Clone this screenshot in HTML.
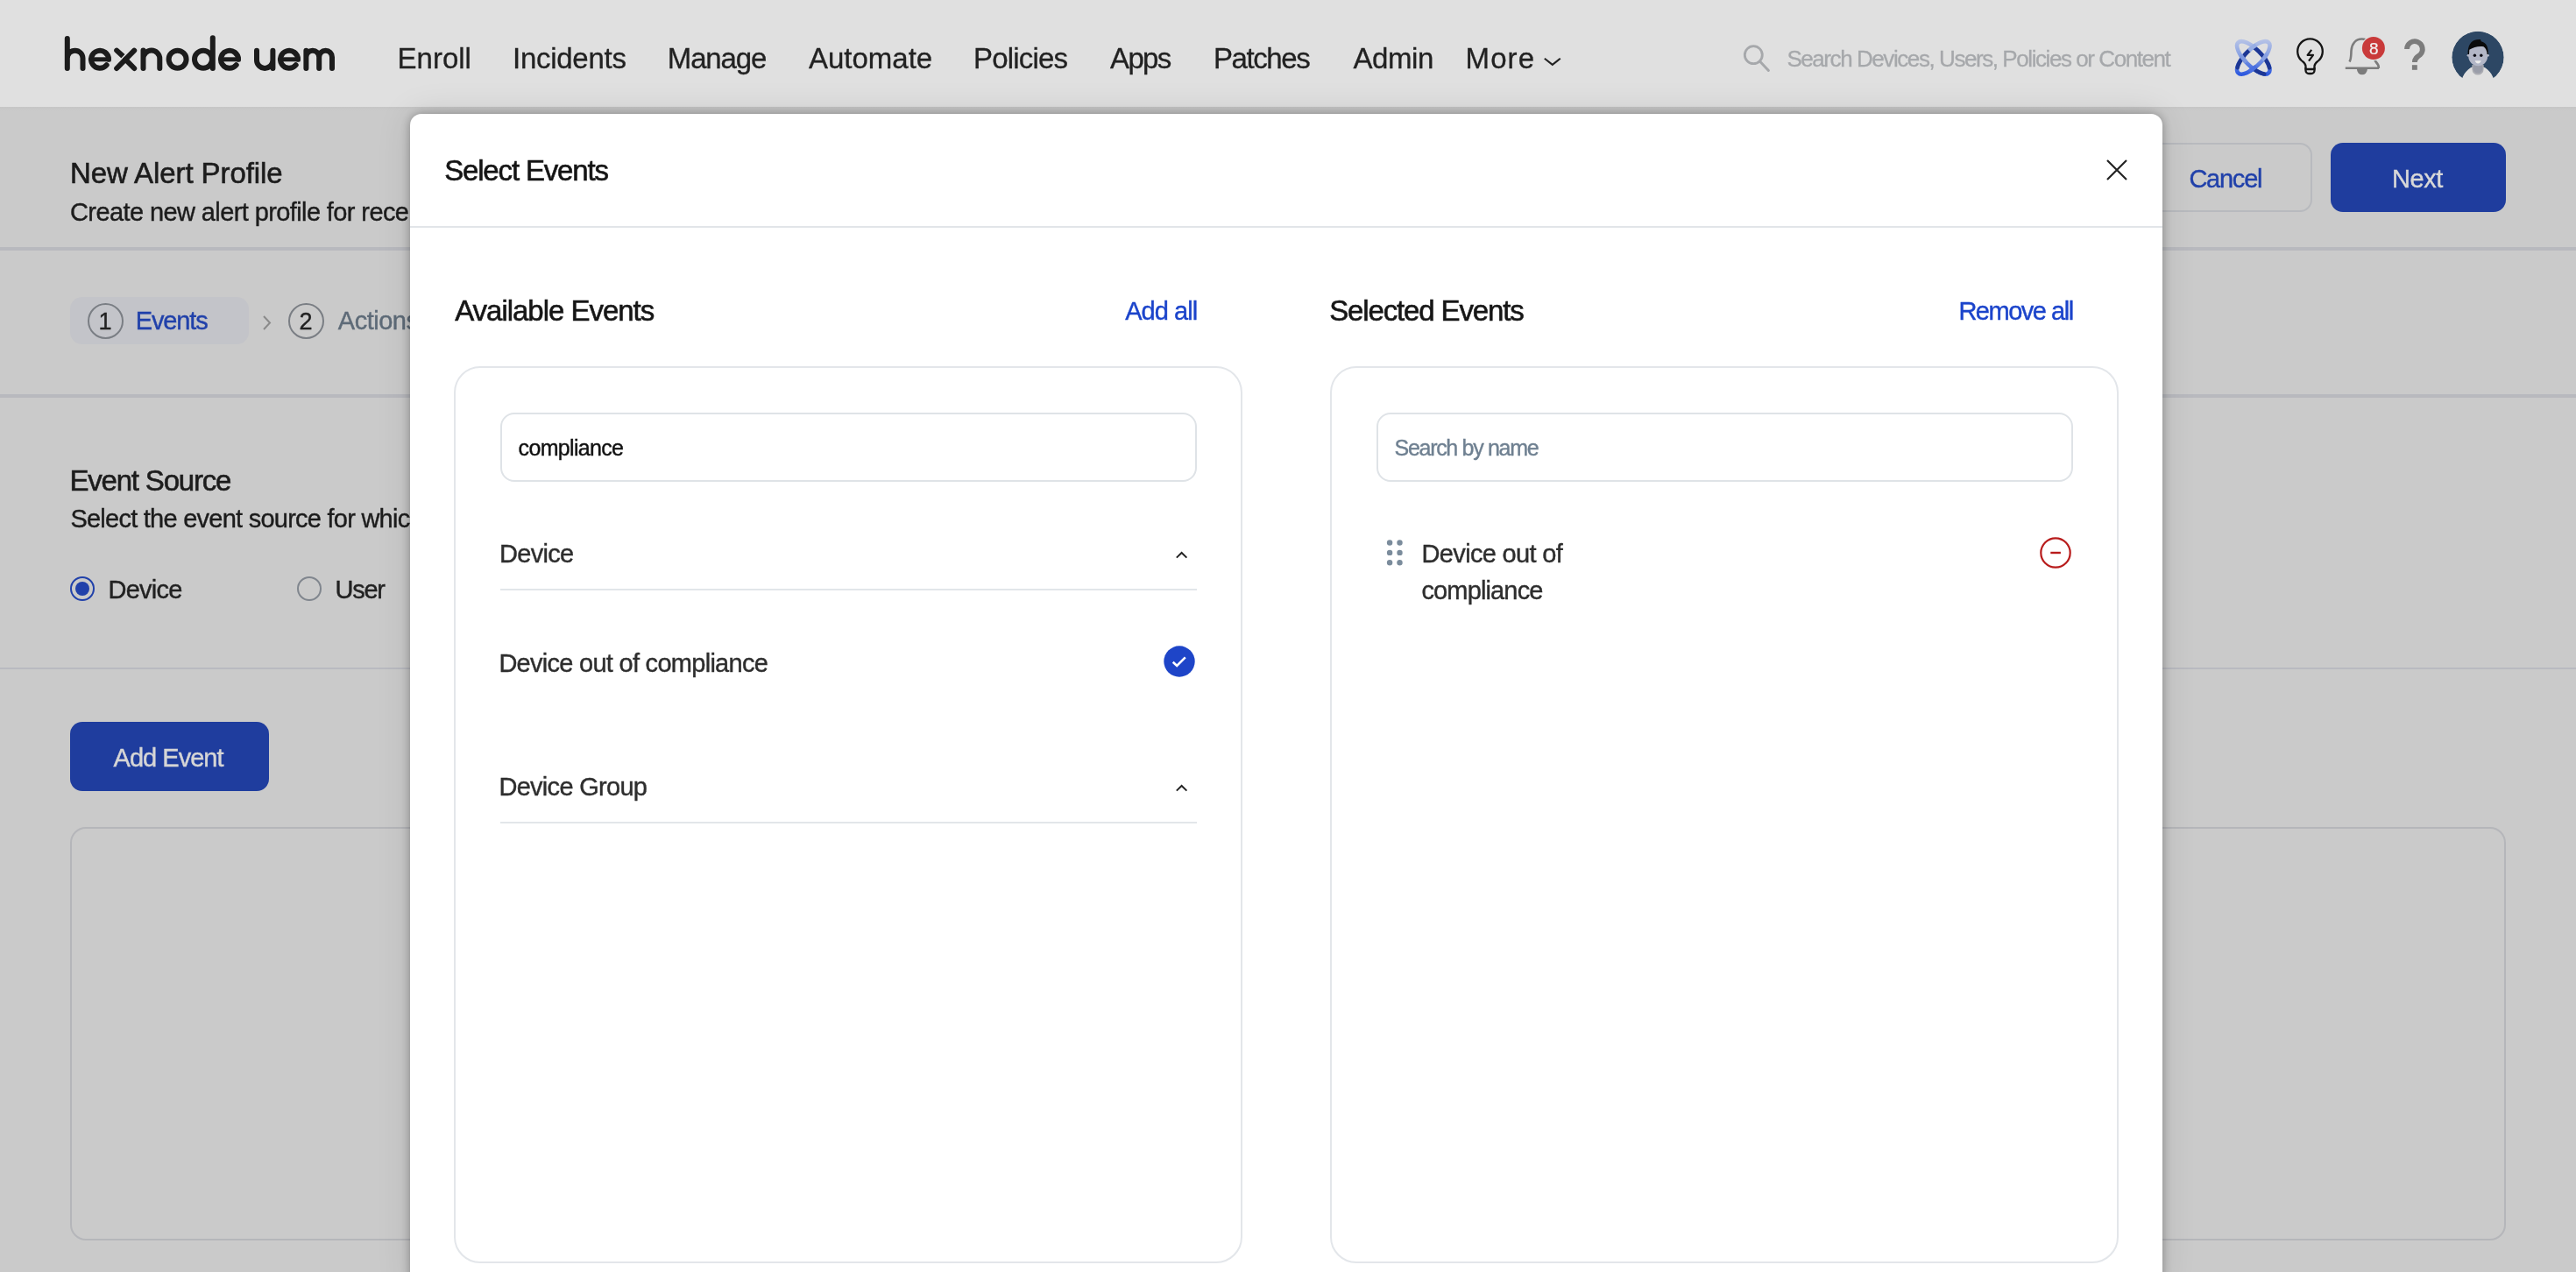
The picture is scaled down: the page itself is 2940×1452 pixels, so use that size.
<!DOCTYPE html>
<html><head><meta charset="utf-8">
<style>
html,body{margin:0;padding:0;}
body{width:2940px;height:1452px;overflow:hidden;position:relative;background:#cacaca;font-family:"Liberation Sans",sans-serif;will-change:transform;}
.t{position:absolute;line-height:1;white-space:nowrap;}
.abs{position:absolute;}
#hdr{position:absolute;left:0;top:0;width:2940px;height:122px;background:#e0e0e0;}
#hdrsh{position:absolute;left:0;top:122px;width:2940px;height:5px;background:linear-gradient(#c6c6c6,#cacaca);}
.nav{font-size:32px;color:#222;letter-spacing:-0.3px;}
.sep{position:absolute;left:0;width:2940px;}
#modal{position:absolute;left:468px;top:130px;width:2000px;height:1340px;background:#fff;border-radius:13px 13px 0 0;box-shadow:0 0 12px 0 rgba(0,0,0,0.30),0 0 40px 0 rgba(0,0,0,0.11);}
.m{position:absolute;}
.h32{font-size:32px;color:#161616;letter-spacing:-0.6px;}
.lnk{font-size:28px;color:#1b44cb;letter-spacing:-0.6px;}
.panel{position:absolute;top:288px;width:900px;height:1024px;border:2px solid #e3e6ea;border-radius:30px;box-sizing:border-box;}
.inp{position:absolute;width:795px;height:79px;border:2px solid #dfe3e7;border-radius:16px;box-sizing:border-box;}
.item{font-size:28px;color:#2e2e2e;letter-spacing:-0.4px;}
</style></head>
<body>
<!-- header -->
<div id="hdr">
  <svg class="abs" style="left:0;top:0" width="400" height="122" viewBox="0 0 400 122">
    <g fill="none" stroke="#1c1c1c" stroke-width="6" stroke-linecap="round">
      <!-- h -->
      <path d="M76.8,44 V78 M76.8,66.5 A8.85,8.85 0 0 1 94.5,66.5 V78"/>
      <!-- e -->
      <path d="M124,67.8 A10,10 0 1 0 121.7,74.2"/>
      <path d="M104,67.8 H126.5" stroke-linecap="butt" stroke-width="5"/>
      <!-- x -->
      <path d="M133.2,57.6 L140.5,64.3" stroke-linecap="round"/>
      <path d="M153.2,57.6 L133.2,78" stroke="#e0e0e0" stroke-width="9" stroke-linecap="butt"/>
      <path d="M153.2,57.6 L133.2,78"/>
      <path d="M143.2,67.8 L153.2,78"/>
      <!-- n -->
      <path d="M163.5,57.6 V78 M163.5,67 A9.4,9.4 0 0 1 182.3,67 V78"/>
      <!-- o -->
      <circle cx="202.6" cy="67.8" r="10"/>
      <!-- d -->
      <circle cx="232" cy="67.8" r="10"/>
      <path d="M242.8,43.3 V78"/>
      <!-- e -->
      <path d="M272,67.8 A10,10 0 1 0 269.7,74.2"/>
      <path d="M252,67.8 H274.5" stroke-linecap="butt" stroke-width="5"/>
      <!-- u -->
      <path d="M293,57.8 V68.7 A9.2,9.2 0 0 0 311.4,68.7 M311.4,57.8 V78"/>
      <!-- e -->
      <path d="M340,67.8 A10,10 0 1 0 337.7,74.2"/>
      <path d="M320,67.8 H342.5" stroke-linecap="butt" stroke-width="5"/>
      <!-- m -->
      <path d="M349.4,57.8 V78 M349.4,65.2 A7.4,7.4 0 0 1 364.2,65.2 V78 M364.2,65.2 A7.4,7.4 0 0 1 379,65.2 V78"/>
    </g>
  </svg>
<div class="t" id="n1" style="left:453.60px;top:50px;font-size:33px;color:#222;letter-spacing:-0.02px;-webkit-text-stroke:0.3px #222">Enroll</div>
<div class="t" id="n2" style="left:585.00px;top:50px;font-size:33px;color:#222;letter-spacing:-0.27px;-webkit-text-stroke:0.3px #222">Incidents</div>
<div class="t" id="n3" style="left:761.80px;top:50px;font-size:33px;color:#222;letter-spacing:-1.16px;-webkit-text-stroke:0.3px #222">Manage</div>
<div class="t" id="n4" style="left:923.00px;top:50px;font-size:33px;color:#222;letter-spacing:-0.01px;-webkit-text-stroke:0.3px #222">Automate</div>
<div class="t" id="n5" style="left:1111.00px;top:50px;font-size:33px;color:#222;letter-spacing:-0.81px;-webkit-text-stroke:0.3px #222">Policies</div>
<div class="t" id="n6" style="left:1267.00px;top:50px;font-size:33px;color:#222;letter-spacing:-1.63px;-webkit-text-stroke:0.3px #222">Apps</div>
<div class="t" id="n7" style="left:1385.00px;top:50px;font-size:33px;color:#222;letter-spacing:-1.42px;-webkit-text-stroke:0.3px #222">Patches</div>
<div class="t" id="n8" style="left:1544.40px;top:50px;font-size:33px;color:#222;letter-spacing:-0.42px;-webkit-text-stroke:0.3px #222">Admin</div>
<div class="t" id="n9" style="left:1672.60px;top:50px;font-size:33px;color:#222;letter-spacing:1.07px;-webkit-text-stroke:0.3px #222">More</div>
  <svg class="abs" style="left:1760px;top:60px" width="24" height="16"><path d="M2.8,6.7 L11.8,13.9 L20.8,6.7" fill="none" stroke="#222" stroke-width="2.1"/></svg>
  <!-- search -->
  <svg class="abs" style="left:1985px;top:47px" width="40" height="40"><circle cx="16.3" cy="15.7" r="10" fill="none" stroke="#a6a8ab" stroke-width="2.8"/><path d="M23.5,23 L33.4,33.5" stroke="#a6a8ab" stroke-width="3" stroke-linecap="round"/></svg>
<div class="t" id="srch" style="left:2039.40px;top:54px;font-size:26px;color:#a6a8ab;letter-spacing:-1.43px;-webkit-text-stroke:0.3px #a6a8ab">Search Devices, Users, Policies or Content</div>
  <svg class="abs" style="left:2500px;top:0" width="440" height="122" viewBox="2500 0 440 122">
    <defs>
      <linearGradient id="ag" x1="0" y1="45" x2="0" y2="87" gradientUnits="userSpaceOnUse">
        <stop offset="0" stop-color="#b8c4e6"/><stop offset="0.45" stop-color="#86a0e3"/><stop offset="1" stop-color="#2552de"/>
      </linearGradient>
      <linearGradient id="ad" x1="0" y1="50" x2="0" y2="86" gradientUnits="userSpaceOnUse">
        <stop offset="0" stop-color="#1b3590"/><stop offset="1" stop-color="#243f9e"/>
      </linearGradient>
    </defs>
    <g fill="none" stroke-width="4.6" stroke-linecap="round">
      <path d="M2554.48,48.58 A24.5,9.4 45 1 1 2589.12,83.22 A24.5,9.4 45 1 1 2554.48,48.58 Z" stroke="url(#ag)"/>
      <path d="M2589.12,48.58 A24.5,9.4 -45 1 1 2554.48,83.22 A24.5,9.4 -45 1 1 2589.12,48.58 Z" stroke="url(#ag)"/>
      <path d="M2573.2,54.6 L2574.9,56.0 L2577.4,58.2 L2579.7,60.6 L2581.9,63.0 L2584.0,65.6 L2585.8,68.1 L2587.3,70.6 L2588.6,73.0 L2589.5,75.3 L2590.1,77.4" stroke="#1d3794"/>
      <path d="M2584.3,84.4 L2583.3,84.2 L2582.3,83.9 L2581.2,83.6 L2580.1,83.2 L2578.9,82.7 L2577.7,82.1 L2576.5,81.4 L2575.3,80.7 L2574.0,79.9" stroke="#1d3794"/>
      <path d="M2553.6,77.2 L2554.1,75.3 L2554.9,73.2 L2556.0,71.1 L2557.4,68.8 L2558.9,66.5 L2560.7,64.2 L2562.6,61.9 L2564.7,59.7 L2566.9,57.6" stroke="#1d3794"/>
      <path d="M2563.7,71.0 L2562.2,69.4 L2560.9,67.8 L2559.6,66.2 L2558.5,64.6 L2557.4,63.0" stroke="#7d98e0" stroke-linecap="butt"/>
      <path d="M2566.7,57.8 L2568.3,56.3 L2569.9,55.0 L2571.5,53.7 L2573.1,52.6 L2574.7,51.5" stroke="#97ade4" stroke-linecap="butt"/>
      <path d="M2587.2,61.4 L2584.8,65.1 L2581.8,68.9" stroke="#87a0e2" stroke-linecap="butt"/>
      <path d="M2574.8,75.9 L2571.0,78.9 L2567.3,81.3" stroke="#4a6fe0" stroke-linecap="butt"/>
    </g>
    <!-- bulb -->
    <g fill="none" stroke="#161616" stroke-width="2.3" stroke-linejoin="round" stroke-linecap="round">
      <path d="M2631.5,79 V75.5 C2631.5,72.5 2629.5,71.5 2626.6,69 A14.3,14.3 0 1 1 2646.4,69 C2643.5,71.5 2641.5,72.5 2641.5,75.5 V79"/>
      <path d="M2631.5,79 H2641.5 M2631.5,78 V80.5 A3.5,3.5 0 0 0 2635,84 H2638 A3.5,3.5 0 0 0 2641.5,80.5 V78"/>
      <path d="M2638.2,56.8 L2633.6,62.8 H2640 L2635,69.6" stroke-width="2.2" stroke-linecap="butt"/>
    </g>
    <!-- bell -->
    <g fill="none" stroke="#7c7c7c" stroke-width="2.6">
      <path d="M2681.4,70.5 C2683.5,67.5 2683.2,64 2683.5,58 C2684,50 2688.5,44.5 2695.7,44.5 C2702,44.5 2706,49 2707,55 C2708,62 2708.5,66.5 2711.5,70.5 C2714,73 2715,74.5 2714.8,77.8"/>
      <path d="M2676.8,77.8 H2715"/>
    </g>
    <path d="M2689.9,78.8 A6,6.5 0 0 0 2701.9,78.8 Z" fill="#7c7c7c"/>
    <circle cx="2708.9" cy="55" r="14.2" fill="#e0e0e0"/>
    <circle cx="2708.9" cy="55" r="13" fill="#c93a3a"/>
    <text x="2709.2" y="62.3" font-family="Liberation Sans" font-size="19" fill="#f2f2f2" stroke="#f2f2f2" stroke-width="0.2" text-anchor="middle">8</text>
    <!-- question -->
    <path d="M2747,56 A8.9,8.9 0 1 1 2762.3,62.3 C2758.5,65 2755.9,66.5 2755.9,71" fill="none" stroke="#7c7c7c" stroke-width="5.8"/>
    <rect x="2752.9" y="74.2" width="5.9" height="5.6" fill="#7c7c7c"/>
    <!-- avatar -->
    <defs><clipPath id="avc"><circle cx="2828" cy="65.5" r="29.7"/></clipPath></defs>
    <g clip-path="url(#avc)">
      <circle cx="2828" cy="65.5" r="29.7" fill="#2d4764"/>
    </g>
    <path d="M2809.5,91 C2813,81 2819.5,75.2 2828,75.2 C2836.5,75.2 2843,81 2846.5,91 L2852,97 H2804 Z" fill="#e0e0e0"/>
    <path d="M2821.4,74 H2834.6 V79 A6.6,6.6 0 0 1 2821.4,79 Z" fill="#acadb3"/>
    <path d="M2822.5,74 H2833.5 V78 A5.5,5.5 0 0 1 2822.5,78 Z" fill="#9a9da9"/>
    <path d="M2817.2,60 C2817.2,53 2821,50 2828.2,50 C2835.5,50 2839.3,53 2839.3,60 L2839.2,64 C2839,71 2834,75.2 2828.2,75.2 C2822.5,75.2 2817.4,71 2817.2,64 Z" fill="#b3b7c7"/><circle cx="2817" cy="63.3" r="1.4" fill="#b3b7c7"/><circle cx="2839.5" cy="63.3" r="1.4" fill="#b3b7c7"/>
    <path d="M2816.6,62 C2816.3,52 2820,46 2827,45.2 L2831,45 L2831.8,47.3 C2837.5,48.5 2840.2,54 2839.8,62 L2838.6,62 C2838.4,58 2837,55 2834.5,53.2 C2829,52.4 2823,53.6 2818.3,56.8 L2818,62 Z" fill="#0a0a0a"/>
    <circle cx="2824.4" cy="63.3" r="1.7" fill="#0c0c14"/>
    <circle cx="2831.8" cy="63.3" r="1.7" fill="#0c0c14"/>
    <path d="M2824.6,69.3 H2831.8 C2831,71.6 2829.5,72.5 2828.2,72.5 C2826.9,72.5 2825.4,71.6 2824.6,69.3 Z" fill="#ececec"/>
  </svg>
</div>
<div id="hdrsh"></div>

<!-- page -->
<div class="t" id="ttl" style="left:80.00px;top:181px;font-size:33px;color:#1c1c1c;letter-spacing:-0.08px;-webkit-text-stroke:0.6px #1c1c1c">New Alert Profile</div>
<div class="t" id="sub" style="left:80.00px;top:228px;font-size:29px;color:#1c1c1c;letter-spacing:-0.60px;-webkit-text-stroke:0.4px #1c1c1c">Create new alert profile for receiving notifications</div>
<div class="sep" style="top:282px;height:4px;background:#b8b9be"></div>
<div class="abs" style="left:80px;top:339px;width:204px;height:54px;border-radius:14px;background:#c3c4c9"></div>
<div class="abs" style="left:100px;top:346px;width:37px;height:37px;border:2px solid #7a7e84;border-radius:50%"></div>
<div class="t" id="s1" style="left:112.50px;top:354px;font-size:27px;color:#222;letter-spacing:-0.30px;-webkit-text-stroke:0.4px #222">1</div>
<div class="t" id="sev" style="left:154.80px;top:352px;font-size:29px;color:#2141aa;letter-spacing:-1.14px;-webkit-text-stroke:0.4px #2141aa">Events</div>
<svg class="abs" style="left:296px;top:356px" width="20" height="26"><path d="M5,5 L12,12.5 L5,20" fill="none" stroke="#8a8a8a" stroke-width="2"/></svg>
<div class="abs" style="left:329px;top:346px;width:37px;height:37px;border:2px solid #7a7e84;border-radius:50%"></div>
<div class="t" id="s2" style="left:341.50px;top:354px;font-size:27px;color:#222;letter-spacing:-0.30px;-webkit-text-stroke:0.4px #222">2</div>
<div class="t" id="sact" style="left:385.80px;top:352px;font-size:29px;color:#5e6b78;letter-spacing:-0.50px;-webkit-text-stroke:0.4px #5e6b78">Actions</div>
<div class="sep" style="top:450px;height:4px;background:#b8b9be"></div>

<div class="t" id="esrc" style="left:79.40px;top:532px;font-size:33px;color:#1c1c1c;letter-spacing:-1.19px;-webkit-text-stroke:0.6px #1c1c1c">Event Source</div>
<div class="t" id="sub2" style="left:80.40px;top:578px;font-size:29px;color:#1c1c1c;letter-spacing:-0.75px;-webkit-text-stroke:0.4px #1c1c1c">Select the event source for which you want to create alert</div>
<div class="abs" style="left:80px;top:658px;width:24px;height:24px;border:2px solid #2141aa;border-radius:50%"></div>
<div class="abs" style="left:86px;top:664px;width:16px;height:16px;background:#2141aa;border-radius:50%"></div>
<div class="t" id="rdev" style="left:123.60px;top:659px;font-size:29px;color:#222;letter-spacing:-0.78px;-webkit-text-stroke:0.4px #222">Device</div>
<div class="abs" style="left:339px;top:658px;width:24px;height:24px;border:2px solid #80868e;border-radius:50%"></div>
<div class="t" id="rusr" style="left:382.60px;top:659px;font-size:29px;color:#222;letter-spacing:-1.30px;-webkit-text-stroke:0.4px #222">User</div>
<div class="sep" style="top:762px;height:2px;background:#b9bac0"></div>
<div class="abs" style="left:80px;top:824px;width:227px;height:79px;border-radius:14px;background:#1f3d9e"></div>
<div class="t" id="addev" style="left:129.60px;top:851px;font-size:29px;color:#d6d6d6;letter-spacing:-0.99px;-webkit-text-stroke:0.4px #d6d6d6">Add Event</div>
<div class="abs" style="left:80px;top:944px;width:2780px;height:472px;border:2px solid #b5b6ba;border-radius:18px;box-sizing:border-box"></div>

<div class="abs" style="left:2440px;top:163px;width:199px;height:79px;border:2px solid #b8babe;border-radius:14px;box-sizing:border-box"></div>
<div class="t" id="cncl" style="left:2498.40px;top:190px;font-size:29px;color:#2141aa;letter-spacing:-1.24px;-webkit-text-stroke:0.4px #2141aa">Cancel</div>
<div class="abs" style="left:2660px;top:163px;width:200px;height:79px;border-radius:14px;background:#1f3d9e"></div>
<div class="t" id="next" style="left:2730.00px;top:190px;font-size:29px;color:#d8d8d8;letter-spacing:-0.47px;-webkit-text-stroke:0.4px #d8d8d8">Next</div>

<!-- modal -->
<div id="modal">
<div class="t" id="mttl" style="left:39.20px;top:48px;font-size:33px;color:#141414;letter-spacing:-1.17px;-webkit-text-stroke:0.6px #141414">Select Events</div>
  <svg class="m" style="left:1932px;top:48px" width="32" height="32"><path d="M5,5 L27,27 M27,5 L5,27" stroke="#222" stroke-width="2.2"/></svg>
  <div class="m" style="left:0;top:128px;width:2000px;height:2px;background:#e2e5e9"></div>

<div class="t" id="avl" style="left:51.20px;top:208px;font-size:33px;color:#161616;letter-spacing:-1.02px;-webkit-text-stroke:0.6px #161616">Available Events</div>
<div class="t" id="addall" style="left:816.20px;top:211px;font-size:29px;color:#1b44cb;letter-spacing:-0.95px;-webkit-text-stroke:0.4px #1b44cb">Add all</div>
  <div class="panel" style="left:50px"></div>
  <div class="inp" style="left:102.5px;top:340.5px"></div>
<div class="t" id="cmp" style="left:123.60px;top:369px;font-size:25px;color:#111;letter-spacing:-0.68px;-webkit-text-stroke:0.4px #111">compliance</div>
<div class="t" id="gdev" style="left:102.00px;top:488px;font-size:29px;color:#2e2e2e;letter-spacing:-0.70px;-webkit-text-stroke:0.4px #2e2e2e">Device</div>
  <svg class="m" style="left:870px;top:496px" width="22" height="16"><path d="M4.8,10.6 L10.6,5 L16.4,10.6" fill="none" stroke="#222" stroke-width="2"/></svg>
  <div class="m" style="left:103px;top:542px;width:795px;height:2px;background:#e2e6ea"></div>
<div class="t" id="doc" style="left:101.40px;top:613px;font-size:29px;color:#2e2e2e;letter-spacing:-0.72px;-webkit-text-stroke:0.4px #2e2e2e">Device out of compliance</div>
  <svg class="m" style="left:860px;top:607px" width="36" height="36"><circle cx="18" cy="18" r="17.7" fill="#1e45c8"/><path d="M10.7,18.8 L15.2,23 L24.8,13.4" fill="none" stroke="#fff" stroke-width="2.6"/></svg>
<div class="t" id="ggrp" style="left:101.40px;top:754px;font-size:29px;color:#2e2e2e;letter-spacing:-0.70px;-webkit-text-stroke:0.4px #2e2e2e">Device Group</div>
  <svg class="m" style="left:870px;top:762px" width="22" height="16"><path d="M4.8,10.6 L10.6,5 L16.4,10.6" fill="none" stroke="#222" stroke-width="2"/></svg>
  <div class="m" style="left:103px;top:808px;width:795px;height:2px;background:#e2e6ea"></div>

<div class="t" id="sel" style="left:1049.20px;top:208px;font-size:33px;color:#161616;letter-spacing:-1.14px;-webkit-text-stroke:0.6px #161616">Selected Events</div>
<div class="t" id="remall" style="left:1767.40px;top:211px;font-size:29px;color:#1b44cb;letter-spacing:-1.48px;-webkit-text-stroke:0.4px #1b44cb">Remove all</div>
  <div class="panel" style="left:1050px"></div>
  <div class="inp" style="left:1102.5px;top:340.5px"></div>
<div class="t" id="sbn" style="left:1123.60px;top:369px;font-size:25px;color:#6f8091;letter-spacing:-1.31px;-webkit-text-stroke:0.4px #6f8091">Search by name</div>
  <svg class="m" style="left:1110px;top:482px" width="24" height="36"><g fill="#7b8c9c"><circle cx="8.1" cy="7.5" r="3.2"/><circle cx="19.5" cy="7.5" r="3.2"/><circle cx="8.1" cy="18.9" r="3.2"/><circle cx="19.5" cy="18.9" r="3.2"/><circle cx="8.1" cy="30.3" r="3.2"/><circle cx="19.5" cy="30.3" r="3.2"/></g></svg>
<div class="t" id="do2" style="left:1154.60px;top:488px;font-size:29px;color:#2e2e2e;letter-spacing:-0.67px;-webkit-text-stroke:0.4px #2e2e2e">Device out of</div>
<div class="t" id="cmp2" style="left:1154.40px;top:530px;font-size:29px;color:#2e2e2e;letter-spacing:-0.85px;-webkit-text-stroke:0.4px #2e2e2e">compliance</div>
  <svg class="m" style="left:1858px;top:483px" width="40" height="40"><circle cx="20" cy="18" r="16.7" fill="none" stroke="#b81c1c" stroke-width="2.2"/><path d="M14.3,18 H25.9" stroke="#b81c1c" stroke-width="2.4"/></svg>
</div>
</body></html>
